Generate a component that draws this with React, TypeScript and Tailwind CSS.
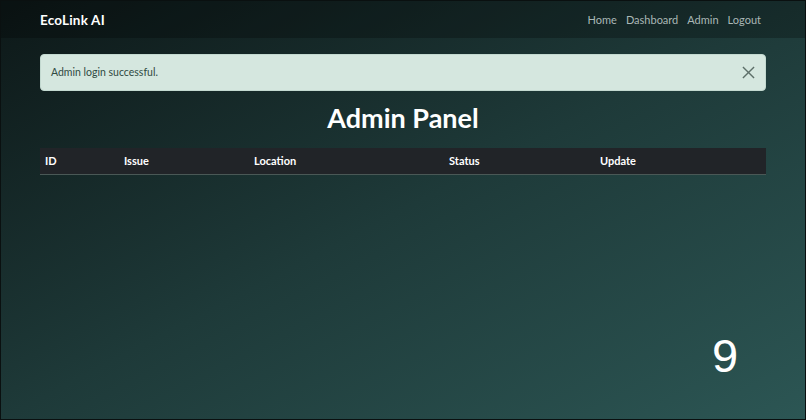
import React, { useState } from 'react';

const COLUMNS = [
  { label: 'ID', width: 'w-[79px]' },
  { label: 'Issue', width: 'w-[130px]' },
  { label: 'Location', width: 'w-[195px]' },
  { label: 'Status', width: 'w-[151px]' },
  { label: 'Update', width: 'flex-1' },
];

const NAV_LINKS = ['Home', 'Dashboard', 'Admin', 'Logout'];

const App: React.FC = () => {
  const [showAlert, setShowAlert] = useState(true);

  return (
    <div
      className="relative h-[420px] w-full overflow-hidden border border-[#0a1010] bg-linear-to-br from-[#0d1818] via-[#1e3a39] to-[#2c5654] text-white"
      style={{ fontFamily: 'Lato, "Open Sans", sans-serif' }}
    >
      <nav className="flex h-[37px] items-center justify-between bg-black/25 pl-[39px] pr-[44px] pt-[2px]">
        <span className="text-[13.5px] font-bold tracking-[0.2px]">EcoLink AI</span>
        <ul className="flex gap-[9px] text-[11px] text-[#aab7b6]">
          {NAV_LINKS.map((link) => (
            <li key={link}>{link}</li>
          ))}
        </ul>
      </nav>

      <main className="px-[39px] pt-[16px]">
        {showAlert && (
          <div className="flex h-[37px] items-center justify-between rounded-[4px] border border-[#c3d9d0] bg-[#d5e7df] pl-[10px] pr-[10px] text-[10.5px] text-[#2f4a42]">
            <span>Admin login successful.</span>
            <button type="button" onClick={() => setShowAlert(false)} className="text-[#5d6f69]">
              <svg width="13" height="13" viewBox="0 0 14 14" fill="none" stroke="currentColor" strokeWidth="1.5">
                <path d="M1 1l12 12M13 1L1 13" />
              </svg>
            </button>
          </div>
        )}

        <h1 className="mt-[10px] text-center text-[27px] font-bold leading-[34px]">Admin Panel</h1>

        <table className="mt-[13px] w-full border-collapse">
          <thead>
            <tr className="flex h-[27px] items-center border-b border-[#4a5856] bg-[#212428] px-[5px] pt-[1px] text-[11px] font-bold">
              {COLUMNS.map((col) => (
                <th key={col.label} className={`${col.width} text-left`}>
                  {col.label}
                </th>
              ))}
            </tr>
          </thead>
          <tbody />
        </table>
      </main>

      <div
        className="absolute left-[711px] top-[328px] text-[47px] leading-[54px] text-white"
        style={{ fontFamily: '"Liberation Sans", Arial, sans-serif' }}
      >
        9
      </div>
    </div>
  );
};

export default App;
